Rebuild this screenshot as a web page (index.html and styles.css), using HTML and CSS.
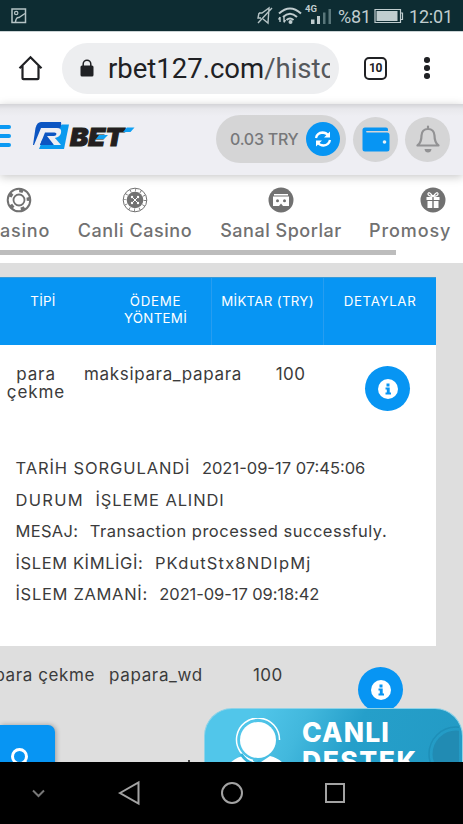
FILE: index.html
```html
<!DOCTYPE html>
<html lang="tr">
<head>
<meta charset="utf-8">
<title>RBET</title>
<link rel="stylesheet" href="styles.css">
</head>
<body>
<div class="status">
  <svg class="s-img" width="16" height="16" viewBox="0 0 16 16" fill="none" stroke="#b5c3c5" stroke-width="1.5"><rect x="1" y="1" width="13.5" height="13.5"/><circle cx="5.2" cy="5" r="1.7" stroke-width="1.2"/><path d="M4.500 14Q5 9 8 9.500L14 5.500"/></svg>
  <svg class="s-net" width="76" height="24" viewBox="0 0 76 24">
    <g fill="none" stroke="#b5c3c5" stroke-width="1.4"><path d="M2 9h3l7-5-1 15-5-4M2 9l-1 5h3M15 4 1 19"/></g>
    <g fill="none" stroke="#c0cdcf" stroke-width="2"><path d="M22 9.500Q33-.5 44 9.500M26 13Q33 6.500 40 13M29.500 16Q33 13 36.500 16"/></g>
    <circle cx="33.500" cy="18" r="2" fill="#c0cdcf"/><path d="M23 13v5M27 13v5M21.500 15.500 23 13M28.500 16 27 18.500" stroke="#c0cdcf" stroke-width="1.4"/>
    <text class="lte" x="48" y="8">4G</text>
    <path d="M54 15.500h3.500V20H54zM60 12h3v8h-3z" fill="#c0cdcf"/><path d="M66 8.500h2.500V20H66zM71.500 5H74v15h-2.500z" fill="#59767a"/>
  </svg>
  <span class="pct">%81</span>
  <svg class="bat" width="30" height="16" viewBox="0 0 30 16"><path d="M1 1.500h25.500V14.500H1zM26.500 5H28.500v6.500h-2" fill="none" stroke="#c0cdcf" stroke-width="1.200"/><path d="M2.500 3h21v10h-21z" fill="#c0cdcf"/></svg>
  <span class="time">12:01</span>
</div>
<div class="browser">
  <svg class="home" width="26" height="26" viewBox="0 0 26 26" fill="none" stroke="#202124" stroke-width="2.200"><path d="M1.500 13.300 12.500 2.300 23.500 13.300M4.500 11v12.200q0 1 1 1h14q1 0 1-1V11"/></svg>
  <div class="omni">
    <svg width="14" height="19" viewBox="0 0 14 19"><path d="M3.200 7V5a3.800 3.800 0 0 1 7.600 0v2" fill="none" stroke="#202124" stroke-width="1.500"/><rect x=".5" y="6.500" width="13" height="11" rx="1.500" fill="#202124"/></svg>
    <div class="url">rbet127.com<span>/histc</span></div>
  </div>
  <div class="tabs">10</div>
  <div class="dots"><i></i><i></i><i></i></div>
</div>
<header class="site">
  <div class="burger"><i></i><i></i><i></i></div>
  <svg class="logo" width="104" height="30" viewBox="0 0 104 30">
    <path d="M29 3.500h7L31 28H6l2-5z" fill="#0a9aef"/><path d="M8 1h20q.5 2 0 4L20 24H6L0 24 2.500 7Q4 1 8 1z" fill="#0c55c2"/>
    <path d="M8 7h16q5 0 4 5-1 4-6 5l6 7h-7l-7-9h7q2 0 2.500-2 0-1.500-2-1.500H12L7 24H1z" fill="#eeeef3"/>
    <path d="M9 19l4-3 6 8H7z" fill="#0c55c2"/>
    <text class="brand" x="37" y="24.500" textLength="54" lengthAdjust="spacingAndGlyphs">BET</text>
    <path d="M94 6.500h7.500L97.500 11H90zM66 14h9l-4 4h-8z" fill="#10a0f3"/>
  </svg>
  <div class="balance"><span>0.03 TRY</span><b><svg width="18" height="18" viewBox="0 0 18 18" fill="none" stroke="#fff" stroke-width="2.300"><path d="M2 8Q3 3 8.500 2.500q3.500 0 6 3M16 10q-1 5-6.500 5.500-3.500 0-6-3"/><path d="M16 1.500v6h-6zM2 16.500v-6h6z" fill="#fff" stroke="none"/></svg></b></div>
  <div class="round"><svg width="28" height="25" viewBox="0 0 28 25"><path d="M3 .5h21q2 0 2 2v1.500H5q-1 0-1 .7t1 .8h20q2.500 0 2.500 2.500v14q0 2.500-2.500 2.500H3Q.5 24.500.5 22V3Q.5.500 3 .5z" fill="#0795f3"/><circle cx="22.500" cy="15" r="1.800" fill="#e7f1f8"/></svg></div>
  <div class="round"><svg width="24" height="28" viewBox="0 0 24 28"><path d="M12 1.500v2M1.500 20.500h21q-4-3-4-10Q18 4 12 4t-6.500 6.500q0 7-4 10z" fill="none" stroke="#929294" stroke-width="2.200" stroke-linejoin="round" stroke-linecap="round"/><path d="M8.500 24h7q-.5 3.500-3.500 3.500T8.500 24z" fill="#929294"/></svg></div>
</header>
<nav class="menu">
  <div class="item m1"><svg width="26" height="26" viewBox="0 0 26 26" fill="none" stroke="#717171"><circle cx="13" cy="13" r="11.300" stroke-width="2"/><circle cx="13" cy="13" r="9.200" stroke-width="3" stroke-dasharray="4 7.560" stroke-dashoffset="3"/><circle cx="13" cy="13" r="5.500" stroke-width="1.800"/></svg><span>asino</span></div>
  <div class="item m2"><svg width="26" height="26" viewBox="0 0 26 26" fill="none" stroke="#717171"><circle cx="13" cy="13" r="11.800"/><circle cx="13" cy="13" r="10" stroke-width="3" stroke-dasharray=".8 4.436"/><circle cx="13" cy="13" r="8.300" fill="#717171" stroke="none"/><path d="m10 10 6 6m0-6-6 6" stroke="#fff"/><g fill="#fff" stroke="none"><circle cx="10" cy="10" r="1.200"/><circle cx="16" cy="10" r="1.200"/><circle cx="10" cy="16" r="1.200"/><circle cx="16" cy="16" r="1.200"/></g></svg><span>Canli Casino</span></div>
  <div class="item m3"><svg width="26" height="26" viewBox="0 0 26 26"><circle cx="13" cy="13" r="12.500" fill="#717171"/><path d="M6 7h14v1.500H6zM5 9.500h16V19h-6l-2-2.500-2 2.500H5z" fill="#fff"/><g fill="#717171"><circle cx="9.500" cy="13.800" r="1.500"/><circle cx="16.500" cy="13.800" r="1.500"/></g></svg><span>Sanal Sporlar</span></div>
  <div class="item m4"><svg width="26" height="26" viewBox="0 0 26 26"><circle cx="13" cy="13" r="12.500" fill="#717171"/><path d="M6.500 10h5.800v3H6.500zM13.700 10h5.800v3h-5.800zM7.500 14h4.800v7H7.500zM13.700 14h4.800v7h-4.800z" fill="#fff"/><path d="M13 9.500Q7.500 9 8 6.500 9 4 13 9.500 17 4 18 6.500 18.500 9 13 9.500z" fill="none" stroke="#fff" stroke-width="1.200"/></svg><span>Promosy</span></div>
  <div class="scroll"></div>
</nav>
<main>
  <div class="table">
    <div class="row head"><div><span class="h1">TİPİ</span></div><div><span class="h2">ÖDEME</span><br><span class="h3">YÖNTEMİ</span></div><div><span class="h4">MİKTAR (TRY)</span></div><div><span class="h5">DETAYLAR</span></div></div>
    <div class="row first">
      <div class="c1"><span class="t1">para</span><br><span class="t2">çekme</span></div><div class="c2"><span class="t3">maksipara_papara</span></div><div class="c3"><span class="t4">100</span></div>
      <div class="info"><svg width="20" height="20" viewBox="0 0 20 20"><circle cx="10" cy="10" r="10" fill="#fff"/><path d="M8.500 4.500h3v3h-3zM7.500 8.500h4.200v5H13v2H7.500v-2h1.300v-3H7.500z" fill="#0795f3"/></svg></div>
    </div>
    <div class="details">
      <p><span class="d1">TARİH SORGULANDİ</span><span class="e1">2021-09-17 07:45:06</span></p>
      <p><span class="d2">DURUM</span><span class="e2">İŞLEME ALINDI</span></p>
      <p><span class="d3">MESAJ:</span><span class="e3">Transaction processed successfuly.</span></p>
      <p><span class="d4">İSLEM KİMLİGİ:</span><span class="e4">PKdutStx8NDIpMj</span></p>
      <p><span class="d5">İSLEM ZAMANİ:</span><span class="e5">2021-09-17 09:18:42</span></p>
    </div>
  </div>
  <div class="second">
    <div class="s1"><span>para çekme</span></div><div class="s2"><span>papara_wd</span></div><div class="s3"><span class="t4">100</span></div>
    <div class="info"><svg width="20" height="20" viewBox="0 0 20 20"><circle cx="10" cy="10" r="10" fill="#fff"/><path d="M8.500 4.500h3v3h-3zM7.500 8.500h4.200v5H13v2H7.500v-2h1.300v-3H7.500z" fill="#0795f3"/></svg></div>
  </div>
  <div class="search"><svg width="20" height="20" viewBox="0 0 20 20" fill="none" stroke="#fff" stroke-width="3"><circle cx="9.500" cy="9.500" r="7"/><path d="m14 14 5 5"/></svg></div>
  <div class="peek"></div>
  <div class="support">
    <svg class="agent" width="60" height="54" viewBox="0 0 60 54"><circle cx="29" cy="22" r="18" fill="#fff"/><path d="M0 46Q8 38 16 38l13 8 12-8q12 3 16 12v4H0z" fill="#fff"/><path d="M50.500 22A21.500 21.500 0 1 0 24 42.500" fill="none" stroke="#fff" stroke-width="1.500"/><path d="M12 36q6 9 14 10l4-2 4 3v7" fill="none" stroke="#36b5dc" stroke-width="3"/></svg>
    <div class="cd"><span class="cd1">CANLI</span><br><span class="cd2">DESTEK</span></div>
    <svg class="disc" width="36" height="53" viewBox="0 0 36 53"><circle cx="33" cy="45" r="27" fill="none" stroke="#1e8fb8" stroke-width="1.500"/><circle cx="33" cy="45" r="23.500" fill="#218bb3"/></svg>
  </div>
</main>
<footer class="sysnav">
  <svg width="463" height="62" viewBox="0 0 463 62" fill="none" stroke="#a3a3a3" stroke-width="2"><path d="m33 28.500 5.500 5.500 5.500-5.500" stroke="#777"/><path d="M120 31 138.500 20.500v21z"/><circle cx="232" cy="31" r="10"/><rect x="326" y="22" width="18" height="18"/></svg>
</footer>
</body>
</html>
```
FILE: styles.css
```css
* { box-sizing: border-box; }
body { margin: 0; width: 463px; height: 824px; overflow: hidden; display: flex; flex-direction: column; background: #fff; color: #3b3b3b; font: 16.5px/18px Inter, "Open Sans", sans-serif; }
body > * { flex: none; }
svg { display: block; flex: none; }
i { display: block; }
span { white-space: nowrap; }

.status { height: 32px; display: flex; align-items: center; padding-left: 11px; background: #0d2c32; border-bottom: 1px solid #cbd3d5; color: #c0cdcf; font: 18px/32px Roboto, sans-serif; }
.s-net { margin-left: 230px; }
.lte { font: bold 9.5px Roboto, sans-serif; fill: #c0cdcf; }
.pct { margin-left: 5px; width: 36px; letter-spacing: -.2px; padding-top: 2px; }
.bat { width: 30px; }
.time { margin-left: 5px; letter-spacing: -.2px; padding-top: 2px; }

.browser { height: 72px; display: flex; align-items: center; padding: 0 0 0 18px; color: #202124; }
.omni { margin-left: 18px; margin-top: 1px; width: 277px; height: 51px; border-radius: 26px; background: #edeef0; display: flex; align-items: center; padding-left: 18px; }
.url { margin: 1px 0 0 14px; width: 222px; overflow: hidden; white-space: nowrap; font: 27.5px/40px Roboto, sans-serif; letter-spacing: 0; }
.url span { color: #55585c; }
.tabs { margin-left: 25px; width: 23px; height: 23px; border: 2px solid #202124; border-radius: 5px; text-align: center; font: bold 12px/19px Roboto, sans-serif; letter-spacing: -.3px; }
.dots { margin-left: 37px; display: flex; flex-direction: column; gap: 2.5px; }
.dots i { width: 5.5px; height: 5.5px; border-radius: 50%; background: #202124; }

.site { height: 71px; display: flex; align-items: center; background: linear-gradient(#d4d4d8 0, #e8e8ec 5px, #eeeef3 12px); box-shadow: 0 2px 9px rgba(0,0,0,.22); position: relative; z-index: 1; padding-bottom: 1px; }
.burger { width: 11px; display: flex; flex-direction: column; gap: 5px; margin-top: -6px; }
.burger i { height: 3.7px; border-radius: 0 2px 2px 0; background: #0b99f3; }
.logo { margin: -7px 0 0 22px; }
.brand { font: italic 900 25px Inter, sans-serif; fill: #231f20; stroke: #231f20; stroke-width: 1px; }
.balance { margin-left: 79px; width: 130px; height: 48px; border-radius: 24px; background: #d5d5d6; display: flex; align-items: center; padding-left: 14px; color: #77787a; font-weight: 500; font-size: 16px; }
.balance span { width: 76px; letter-spacing: -.25px; }
.balance b { width: 34px; height: 34px; border-radius: 50%; background: #0795f3; display: grid; place-items: center; }
.round { margin-left: 7px; width: 45px; height: 45px; border-radius: 50%; background: #d5d5d6; display: grid; place-items: center; }

.menu { height: 88px; position: relative; display: flex; overflow: hidden; padding-top: 12px; color: #717171; font-size: 18px; line-height: 24px; font-weight: 500; }
.item { display: flex; flex-direction: column; align-items: center; gap: 6px; flex: none; }
.m1 { width: 38px; }
.m1 span { align-self: flex-start; letter-spacing: .8px; }
.m2 { width: 114px; margin-left: 40px; }
.m3 { width: 122px; margin-left: 28px; }
.m4 { width: 127px; margin-left: 27px; }
.m2 span { letter-spacing: .58px; }
.m3 span { letter-spacing: .52px; }
.m4 span { align-self: flex-start; letter-spacing: .9px; }
.scroll { position: absolute; left: 0; bottom: 8px; width: 396px; height: 5px; background: #bdbdbd; }

main { height: 499px; padding-top: 14px; background: #dedede; position: relative; overflow: hidden; }
.table { width: 436px; height: 369px; background: #fff; }
.row { display: grid; text-align: center; }
.head { grid-template-columns: 100px 112px 112px 112px; height: 68px; background: #0795f3; color: #fff; font-size: 13.3px; line-height: 17px; border-top: 1px solid #3a9bd8; }
.head > div { padding-top: 15px; }
.head > div:nth-child(n+2) { border-right: 1px solid #269df0; }
.head > div:first-child { padding-right: 14px; }
.head > div:last-child { border: 0; }
.h1 { letter-spacing: .3px; }
.h2 { letter-spacing: .75px; }
.h3, .h4 { letter-spacing: .3px; }
.h5 { letter-spacing: .65px; }
.first { grid-template-columns: 72px 182px 73px 109px; height: 109px; padding-top: 20px; font-size: 17px; }
.t1, .t2 { letter-spacing: .9px; }
.t3 { letter-spacing: .65px; }
.t4 { letter-spacing: .4px; }
.info { width: 45px; height: 45px; border-radius: 50%; background: #0795f3; display: grid; place-items: center; }
.first .info { margin: 1px 0 0 38px; }
.details { padding: 0 15.5px; margin-top: -1px; }
.details p { margin: 0; height: 31.6px; line-height: 31.6px; display: flex; gap: 11.5px; }
.d1 { letter-spacing: .9px; }
.d2 { letter-spacing: 1.3px; }
.e2 { letter-spacing: .88px; }
.d3 { letter-spacing: .3px; }
.e3 { letter-spacing: .5px; }
.d4 { letter-spacing: .6px; }
.e4 { letter-spacing: 1.15px; }
.d5 { letter-spacing: .68px; }
.e5 { letter-spacing: -.08px; }
.second { display: flex; padding-top: 20px; font-size: 17px; }
.s1 { width: 95px; display: flex; justify-content: flex-end; letter-spacing: .6px; }
.s2 { width: 94px; margin-left: 14px; letter-spacing: .65px; }
.s3 { width: 32px; margin-left: 50px; }
.second .info { margin: 1px 0 0 73px; }
.search { position: absolute; left: 0; top: 462px; width: 55px; height: 60px; border-radius: 0 7px 0 0; background: #0795f3; box-shadow: 1px 0 5px rgba(0,0,0,.3); padding: 22px 0 0 10px; }
.peek { position: absolute; left: 188px; top: 497px; width: 2px; height: 2px; background: #444; }
.support { position: absolute; left: 204px; top: 445px; width: 259px; height: 70px; border-radius: 28px 28px 0 0; border: 1px solid #8fd3e8; border-bottom: 0; background: linear-gradient(115deg, #51c6ea 18%, #42b8dd 36%, #259fca 56%, #239ac4); display: flex; overflow: hidden; }
.agent { margin: 9px 0 0 24px; }
.cd { margin: 9px 0 0 13px; color: #fff; font-size: 26.5px; line-height: 29px; font-weight: 800; width: 118px; }
.cd1 { letter-spacing: 1.2px; }
.cd2 { letter-spacing: 1.5px; }
.disc { margin-left: 3px; }
.sysnav { height: 62px; background: #000; }
```
